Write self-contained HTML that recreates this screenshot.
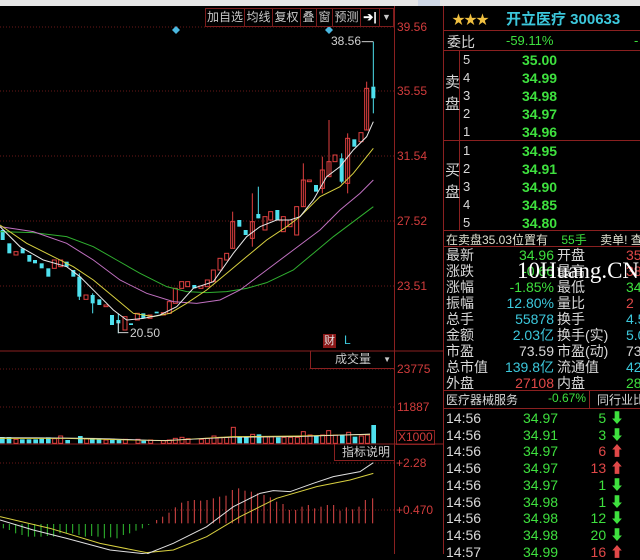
<!DOCTYPE html>
<html><head><meta charset="utf-8">
<style>
*{margin:0;padding:0;box-sizing:border-box}
body{width:640px;height:554px;background:#000;overflow:hidden;position:relative;font-family:"Liberation Sans","Noto Sans CJK SC",sans-serif}
.abs{position:absolute;white-space:nowrap}
.ax{color:#d23c3c;font-size:12px}
.tb{position:absolute;top:8px;height:19px;border:1px solid #7a1c1c;color:#c8c8c8;font-size:12px;line-height:17px;text-align:center;background:#000}
.rp{position:absolute;left:443px;top:6px;width:197px;height:548px;border-left:1px solid #8a2020}
.r{position:absolute;font-size:13px;white-space:nowrap}
.g{color:#3ee03e}.c{color:#3cc8dc}.w{color:#d8d8d8}.rd{color:#e04848}.y{color:#e0e070}
.hl{position:absolute;left:0;width:197px;height:1px;background:#8a2020}
.b{font-weight:bold}
</style></head><body>
<div class="abs" style="left:0;top:0;width:640px;height:6px;background:#e6e6e6"></div>
<div class="abs" style="left:418px;top:0;width:22px;height:6px;background:#cfd8e6"></div>

<svg class="abs" style="left:0;top:0" width="443" height="554">
<g stroke="#6a1818" stroke-width="1" stroke-dasharray="1,2">
<line x1="0" y1="27" x2="394" y2="27"/><line x1="0" y1="91" x2="394" y2="91"/><line x1="0" y1="156" x2="394" y2="156"/><line x1="0" y1="221" x2="394" y2="221"/><line x1="0" y1="286" x2="394" y2="286"/>
<line x1="0" y1="369" x2="394" y2="369"/><line x1="0" y1="407" x2="394" y2="407"/><line x1="0" y1="463" x2="394" y2="463"/><line x1="0" y1="510" x2="394" y2="510"/>
</g>
<line x1="0" y1="351" x2="443" y2="351" stroke="#8a2020"/>
<line x1="0" y1="444" x2="443" y2="444" stroke="#8a2020"/>
<line x1="394.5" y1="6" x2="394.5" y2="554" stroke="#8a2020"/>
<polygon points="176,26 180,30 176,34 172,30" fill="#4ab8e0"/>
<polygon points="329,26 333,30 329,34 325,30" fill="#4ab8e0"/>
<g transform="translate(0,40) scale(0.33333)" fill="none" stroke-width="3">
<line x1="1120" y1="5" x2="1120" y2="140" stroke="#4ee0ee"/>
<line x1="1100" y1="125" x2="1100" y2="270" stroke="#e04040"/>
<line x1="1120" y1="175" x2="1120" y2="220" stroke="#4ee0ee"/>
<line x1="987" y1="240" x2="987" y2="410" stroke="#e04040"/>
<line x1="910" y1="370" x2="910" y2="500" stroke="#e04040"/>
<line x1="775" y1="440" x2="775" y2="535" stroke="#4ee0ee"/>
<line x1="757" y1="460" x2="757" y2="620" stroke="#e04040"/>
<line x1="698" y1="515" x2="698" y2="625" stroke="#e04040"/>
<line x1="238" y1="700" x2="238" y2="780" stroke="#4ee0ee"/>
<line x1="278" y1="760" x2="278" y2="820" stroke="#4ee0ee"/>
<line x1="355" y1="820" x2="355" y2="880" stroke="#4ee0ee"/>
<line x1="1043" y1="280" x2="1043" y2="460" stroke="#e04040"/>
<line x1="1025" y1="340" x2="1025" y2="430" stroke="#4ee0ee"/>
<line x1="967" y1="350" x2="967" y2="460" stroke="#e04040"/>
<g stroke="#e04040">
<rect x="42" y="635" width="12" height="10"/><rect x="157" y="660" width="12" height="25"/><rect x="176" y="660" width="12" height="20"/><rect x="252" y="765" width="12" height="13"/><rect x="312" y="795" width="12" height="5"/><rect x="369" y="830" width="12" height="40"/><rect x="406" y="820" width="12" height="20"/><rect x="444" y="825" width="12" height="10"/><rect x="484" y="818" width="12" height="7"/><rect x="502" y="785" width="12" height="35"/><rect x="520" y="745" width="12" height="45"/><rect x="539" y="725" width="12" height="20"/><rect x="557" y="725" width="12" height="15"/><rect x="597" y="738" width="12" height="7"/><rect x="616" y="720" width="12" height="20"/><rect x="634" y="690" width="12" height="35"/><rect x="654" y="655" width="12" height="35"/><rect x="674" y="640" width="12" height="20"/><rect x="692" y="545" width="12" height="80"/><rect x="751" y="545" width="12" height="50"/><rect x="789" y="530" width="12" height="40"/><rect x="806" y="515" width="12" height="25"/><rect x="844" y="530" width="12" height="45"/><rect x="864" y="540" width="12" height="20"/><rect x="884" y="500" width="12" height="85"/><rect x="904" y="420" width="12" height="80"/><rect x="922" y="420" width="12" height="5"/><rect x="961" y="390" width="12" height="55"/><rect x="981" y="365" width="12" height="45"/><rect x="999" y="345" width="12" height="20"/><rect x="1037" y="295" width="12" height="135"/><rect x="1077" y="278" width="12" height="27"/><rect x="1094" y="145" width="12" height="125"/>
</g>
<g fill="#4ee0ee" stroke="none">
<rect x="2" y="570" width="12" height="30"/><rect x="22" y="610" width="12" height="30"/><rect x="62" y="625" width="12" height="15"/><rect x="82" y="645" width="12" height="20"/><rect x="99" y="660" width="12" height="10"/><rect x="119" y="670" width="12" height="15"/><rect x="139" y="685" width="12" height="25"/><rect x="194" y="665" width="12" height="15"/><rect x="214" y="690" width="12" height="20"/><rect x="232" y="710" width="12" height="60"/><rect x="272" y="765" width="12" height="25"/><rect x="292" y="778" width="12" height="17"/><rect x="330" y="825" width="12" height="30"/><rect x="349" y="840" width="12" height="10"/><rect x="387" y="850" width="12" height="5"/><rect x="424" y="820" width="12" height="15"/><rect x="464" y="815" width="12" height="5"/><rect x="577" y="735" width="12" height="10"/><rect x="712" y="540" width="12" height="20"/><rect x="731" y="570" width="12" height="15"/><rect x="769" y="522" width="12" height="13"/><rect x="826" y="510" width="12" height="30"/><rect x="942" y="435" width="12" height="20"/><rect x="1019" y="355" width="12" height="70"/><rect x="1057" y="298" width="12" height="22"/><rect x="1114" y="140" width="12" height="35"/>
</g>
<polyline stroke="#30b030" points="0,575 100,578 200,590 280,620 350,660 420,700 500,740 560,755 620,758 680,755 740,745 800,728 880,690 940,640 1000,590 1060,545 1120,500"/>
<polyline stroke="#c070c0" points="0,560 100,575 200,610 280,660 360,720 440,760 520,785 590,790 660,780 720,750 800,690 880,630 960,570 1020,510 1080,460 1120,420"/>
<polyline stroke="#d8d040" points="0,555 80,610 160,650 220,680 280,720 340,770 400,820 460,830 510,820 560,790 620,750 680,700 740,650 800,600 860,560 900,530 960,470 1020,440 1060,400 1120,325"/>
<polyline stroke="#e8e8e8" points="0,560 60,620 130,660 200,680 240,710 290,760 340,810 380,840 430,835 480,825 530,800 580,745 640,725 700,640 740,590 780,560 830,540 870,540 900,530 940,480 980,410 1020,380 1060,330 1100,290 1120,245"/>
<polyline stroke="#d0d0d0" points="355,845 355,878 385,878"/>
<polyline stroke="#d0d0d0" points="1085,5 1120,5"/>
</g>
<text x="331" y="45" fill="#d0d0d0" font-size="12" font-family="Liberation Sans">38.56</text>
<text x="130" y="337" fill="#d0d0d0" font-size="12" font-family="Liberation Sans">20.50</text>
<g transform="translate(0,320) scale(0.33333)" stroke-width="3" fill="none">
<g fill="#4ee0ee"><rect x="0" y="352" width="14" height="18"/><rect x="20" y="352" width="14" height="18"/><rect x="60" y="358" width="14" height="12"/><rect x="80" y="358" width="14" height="12"/><rect x="100" y="358" width="14" height="12"/><rect x="118" y="356" width="14" height="14"/><rect x="138" y="352" width="14" height="18"/><rect x="196" y="360" width="14" height="10"/><rect x="234" y="348" width="14" height="22"/><rect x="270" y="355" width="14" height="15"/><rect x="290" y="358" width="14" height="12"/><rect x="330" y="356" width="14" height="14"/><rect x="350" y="360" width="14" height="10"/><rect x="424" y="362" width="14" height="8"/><rect x="712" y="350" width="14" height="20"/><rect x="732" y="352" width="14" height="18"/><rect x="770" y="343" width="14" height="27"/><rect x="828" y="352" width="14" height="18"/><rect x="942" y="348" width="14" height="22"/><rect x="1020" y="345" width="14" height="25"/><rect x="1058" y="350" width="14" height="20"/><rect x="1114" y="315" width="14" height="55"/></g>
<g stroke="#e04040"><rect x="42" y="358" width="12" height="12"/><rect x="158" y="356" width="12" height="14"/><rect x="176" y="348" width="12" height="22"/><rect x="254" y="356" width="12" height="14"/><rect x="312" y="360" width="12" height="10"/><rect x="370" y="358" width="12" height="12"/><rect x="408" y="358" width="12" height="12"/><rect x="446" y="360" width="12" height="10"/><rect x="484" y="362" width="12" height="8"/><rect x="502" y="360" width="12" height="10"/><rect x="520" y="355" width="12" height="15"/><rect x="540" y="352" width="12" height="18"/><rect x="558" y="356" width="12" height="14"/><rect x="598" y="358" width="12" height="12"/><rect x="616" y="355" width="12" height="15"/><rect x="636" y="348" width="12" height="22"/><rect x="654" y="352" width="12" height="18"/><rect x="674" y="352" width="12" height="18"/><rect x="694" y="322" width="12" height="48"/><rect x="752" y="343" width="12" height="27"/><rect x="790" y="350" width="12" height="20"/><rect x="808" y="350" width="12" height="20"/><rect x="846" y="352" width="12" height="18"/><rect x="866" y="352" width="12" height="18"/><rect x="886" y="352" width="12" height="18"/><rect x="904" y="335" width="12" height="35"/><rect x="924" y="345" width="12" height="25"/><rect x="962" y="345" width="12" height="25"/><rect x="980" y="332" width="12" height="38"/><rect x="1000" y="345" width="12" height="25"/><rect x="1040" y="337" width="12" height="33"/><rect x="1078" y="348" width="12" height="22"/><rect x="1096" y="345" width="12" height="25"/></g>
<polyline stroke="#d8d040" points="0,355 200,355 400,360 500,362 700,350 900,348 1110,343"/>
<polyline stroke="#e8e8e8" stroke-width="2" points="0,352 300,355 480,362 700,352 900,350 1110,342"/>
</g>
<g transform="translate(0,320) scale(0.33333)" stroke-width="3" fill="none">
<g stroke="#e04848"><line x1="470" y1="610" x2="470" y2="600"/><line x1="488" y1="610" x2="488" y2="590"/><line x1="507" y1="610" x2="507" y2="578"/><line x1="526" y1="610" x2="526" y2="562"/><line x1="545" y1="610" x2="545" y2="548"/><line x1="564" y1="610" x2="564" y2="543"/><line x1="583" y1="610" x2="583" y2="540"/><line x1="602" y1="610" x2="602" y2="542"/><line x1="621" y1="610" x2="621" y2="540"/><line x1="640" y1="610" x2="640" y2="535"/><line x1="659" y1="610" x2="659" y2="530"/><line x1="678" y1="610" x2="678" y2="527"/><line x1="697" y1="610" x2="697" y2="510"/><line x1="716" y1="610" x2="716" y2="505"/><line x1="735" y1="610" x2="735" y2="512"/><line x1="754" y1="610" x2="754" y2="515"/><line x1="773" y1="610" x2="773" y2="520"/><line x1="792" y1="610" x2="792" y2="525"/><line x1="811" y1="610" x2="811" y2="532"/><line x1="830" y1="610" x2="830" y2="545"/><line x1="849" y1="610" x2="849" y2="552"/><line x1="868" y1="610" x2="868" y2="570"/><line x1="887" y1="610" x2="887" y2="570"/><line x1="906" y1="610" x2="906" y2="560"/><line x1="925" y1="610" x2="925" y2="555"/><line x1="944" y1="610" x2="944" y2="565"/><line x1="963" y1="610" x2="963" y2="560"/><line x1="982" y1="610" x2="982" y2="555"/><line x1="1001" y1="610" x2="1001" y2="555"/><line x1="1020" y1="610" x2="1020" y2="572"/><line x1="1039" y1="610" x2="1039" y2="562"/><line x1="1058" y1="610" x2="1058" y2="568"/><line x1="1077" y1="610" x2="1077" y2="560"/><line x1="1096" y1="610" x2="1096" y2="540"/><line x1="1118" y1="610" x2="1118" y2="535"/></g>
<g stroke="#30c030"><line x1="10" y1="612" x2="10" y2="625"/><line x1="28" y1="612" x2="28" y2="630"/><line x1="47" y1="612" x2="47" y2="640"/><line x1="66" y1="612" x2="66" y2="645"/><line x1="85" y1="612" x2="85" y2="650"/><line x1="104" y1="612" x2="104" y2="650"/><line x1="123" y1="612" x2="123" y2="650"/><line x1="142" y1="612" x2="142" y2="648"/><line x1="161" y1="612" x2="161" y2="650"/><line x1="180" y1="612" x2="180" y2="640"/><line x1="199" y1="612" x2="199" y2="640"/><line x1="218" y1="612" x2="218" y2="640"/><line x1="237" y1="612" x2="237" y2="645"/><line x1="256" y1="612" x2="256" y2="650"/><line x1="275" y1="612" x2="275" y2="648"/><line x1="294" y1="612" x2="294" y2="650"/><line x1="313" y1="612" x2="313" y2="655"/><line x1="332" y1="612" x2="332" y2="652"/><line x1="351" y1="612" x2="351" y2="655"/><line x1="370" y1="612" x2="370" y2="645"/><line x1="389" y1="612" x2="389" y2="640"/><line x1="408" y1="612" x2="408" y2="632"/><line x1="427" y1="612" x2="427" y2="625"/><line x1="446" y1="612" x2="446" y2="615"/></g>
<polyline stroke="#d8d040" points="0,590 150,625 300,670 440,698 520,690 620,650 720,590 830,535 950,500 1050,480 1120,460"/>
<polyline stroke="#e0e0e0" points="0,600 100,630 200,655 330,690 440,702 520,670 620,620 700,560 780,520 820,512 870,515 940,490 1000,470 1080,455 1120,428"/>
</g>
</svg>

<div class="tb" style="left:205px;width:40px">加自选</div>
<div class="tb" style="left:244px;width:29px">均线</div>
<div class="tb" style="left:272px;width:29px">复权</div>
<div class="tb" style="left:300px;width:17px">叠</div>
<div class="tb" style="left:316px;width:17px">窗</div>
<div class="tb" style="left:332px;width:29px">预测</div>
<div class="tb" style="left:360px;width:20px;color:#fff;font-weight:bold">➔|</div>
<div class="tb" style="left:379px;width:15px;font-size:9px">▼</div>

<div class="abs ax" style="left:397px;top:20px">39.56</div>
<div class="abs ax" style="left:397px;top:84px">35.55</div>
<div class="abs ax" style="left:397px;top:149px">31.54</div>
<div class="abs ax" style="left:397px;top:214px">27.52</div>
<div class="abs ax" style="left:397px;top:279px">23.51</div>
<div class="abs ax" style="left:397px;top:362px">23775</div>
<div class="abs ax" style="left:397px;top:400px">11887</div>
<div class="abs ax" style="left:396px;top:430px;border:1px solid #8a2020;padding:0 1px;line-height:13px">X1000</div>
<div class="abs ax" style="left:396px;top:456px">+2.28</div>
<div class="abs ax" style="left:396px;top:503px">+0.470</div>

<div class="abs" style="left:323px;top:334px;background:#8a1818;color:#e0e0e0;font-size:11px;line-height:14px;padding:0 1px">财</div>
<div class="abs c" style="left:344px;top:333px;font-size:12px">L</div>
<div class="abs" style="left:310px;top:351px;width:85px;height:18px;border-left:1px solid #8a2020;border-bottom:1px solid #8a2020;color:#c8c8c8;font-size:12px;line-height:17px;padding-left:24px">成交量<span style="position:absolute;right:4px;font-size:8px">▼</span></div>
<div class="abs" style="left:334px;top:444px;width:61px;height:17px;border-left:1px solid #8a2020;border-bottom:1px solid #8a2020;color:#d0d0d0;font-size:12px;line-height:16px;padding-left:7px">指标说明</div>

<div class="rp">
 <div class="r" style="left:8px;top:3px;color:#f0c040;font-size:13px;letter-spacing:-1px">★★★</div>
 <div class="r c" style="left:62px;top:2px;font-size:15px;font-weight:bold">开立医疗 300633</div>
 <div class="hl" style="top:24px"></div>
 <div class="r w" style="left:3px;top:26px;font-size:14px">委比</div>
 <div class="r g" style="left:62px;top:27px">-59.11%</div>
 <div class="r g" style="left:190px;top:27px">-</div>
 <div class="hl" style="top:44px"></div>
 <div class="abs" style="left:15px;top:44px;width:1px;height:180px;background:#8a2020"></div>
 <div class="r w" style="left:1px;top:66px;font-size:15px;line-height:22px">卖<br>盘</div>
 <div class="r w" style="left:1px;top:154px;font-size:15px;line-height:22px">买<br>盘</div>
 <div class="hl" style="top:134px"></div>
 <div class="r w" style="left:19px;top:45px;line-height:18px">5<br>4<br>3<br>2<br>1</div>
 <div class="r g b" style="left:78px;top:45px;line-height:18px;font-size:14px">35.00<br>34.99<br>34.98<br>34.97<br>34.96</div>
 <div class="r w" style="left:19px;top:136px;line-height:18px">1<br>2<br>3<br>4<br>5</div>
 <div class="r g b" style="left:78px;top:136px;line-height:18px;font-size:14px">34.95<br>34.91<br>34.90<br>34.85<br>34.80</div>
 <div class="hl" style="top:224px"></div>
 <div class="r" style="left:2px;top:225px;font-size:12px;color:#e0e0d0">在卖盘35.03位置有 <span class="g" style="margin-left:10px">55手</span> <span style="margin-left:10px">卖单! 查看详</span></div>
 <div class="hl" style="top:240px"></div>
 <div class="r w" style="left:2px;top:241px;line-height:16px;font-size:14px">最新<br>涨跌<br>涨幅<br>振幅<br>总手<br>金额<br>市盈<br>总市值<br>外盘</div>
 <div class="r" style="left:30px;top:241px;line-height:16px;font-size:14px;width:80px;text-align:right"><span class="g">34.96</span><br><span class="g">-0.66</span><br><span class="g">-1.85%</span><br><span class="c">12.80%</span><br><span class="c">55878</span><br><span class="c">2.03亿</span><br><span class="w">73.59</span><br><span class="c">139.8亿</span><br><span class="rd">27108</span></div>
 <div class="r w" style="left:113px;top:241px;line-height:16px;font-size:14px">开盘<br>最高<br>最低<br>量比<br>换手<br>换手(实)<br>市盈(动)<br>流通值<br>内盘</div>
 <div class="r" style="left:182px;top:241px;line-height:16px;font-size:14px"><span class="rd">35</span><br><span class="rd">38</span><br><span class="g">34</span><br><span class="rd">2</span><br><span class="c">4.5</span><br><span class="c">5.0</span><br><span class="w">73</span><br><span class="c">42.5</span><br><span class="g">28</span></div>
 <div class="hl" style="top:384px"></div>
 <div class="r w" style="left:2px;top:385px;font-size:12px">医疗器械服务</div>
 <div class="r g" style="left:104px;top:385px;font-size:12px">-0.67%</div>
 <div class="abs" style="left:145px;top:384px;width:1px;height:18px;background:#8a2020"></div>
 <div class="r w" style="left:153px;top:385px;font-size:12px">同行业比</div>
 <div class="hl" style="top:402px"></div>
 <div class="r w" style="left:2px;top:404px;line-height:16.7px;font-size:14px">14:56<br>14:56<br>14:56<br>14:56<br>14:56<br>14:56<br>14:56<br>14:56<br>14:57</div>
 <div class="r g" style="left:79px;top:404px;line-height:16.7px;font-size:14px">34.97<br>34.91<br>34.97<br>34.97<br>34.97<br>34.98<br>34.98<br>34.98<br>34.99</div>
 <div class="r" style="left:140px;top:404px;line-height:16.7px;font-size:14px;width:40px;text-align:right"><span class="g">5 ⬇</span><br><span class="g">3 ⬇</span><br><span class="rd">6 ⬆</span><br><span class="rd">13 ⬆</span><br><span class="g">1 ⬇</span><br><span class="g">1 ⬇</span><br><span class="g">12 ⬇</span><br><span class="g">20 ⬇</span><br><span class="rd">16 ⬆</span></div>
</div>
<div class="abs" style="left:517px;top:258px;color:#fff;font-family:'Liberation Serif',serif;font-size:23px">10Huang.CN</div>
</body></html>
